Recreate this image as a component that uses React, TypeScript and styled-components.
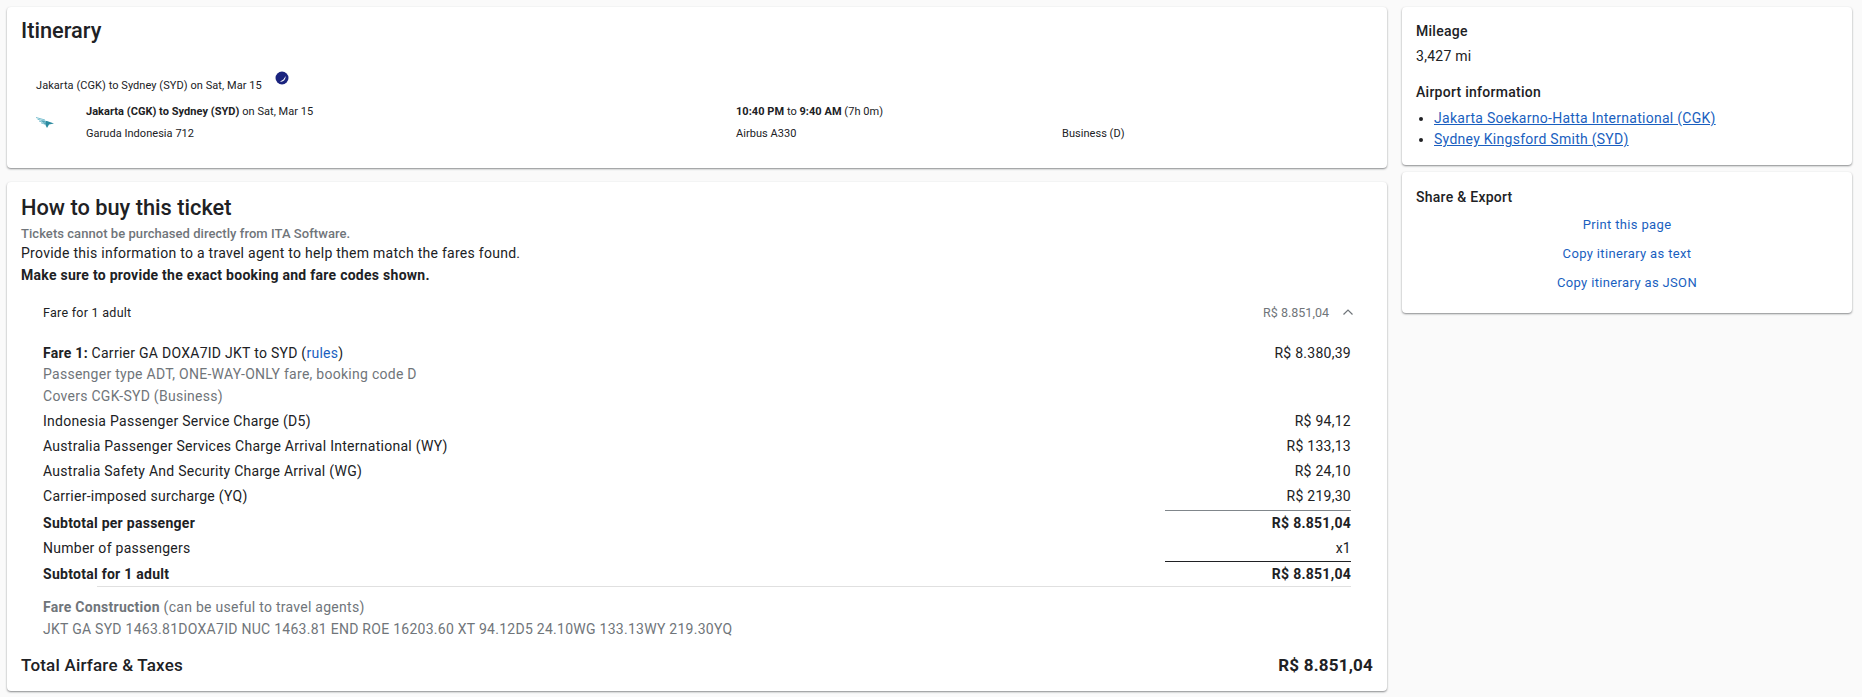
import styled, { createGlobalStyle } from 'styled-components';

const GlobalStyle = createGlobalStyle`
  html, body {
    margin: 0;
    padding: 0;
    background: #fafafa;
    color: #202124;
    font-family: Roboto, "Liberation Sans", sans-serif;
    font-size: 14px;
    letter-spacing: 0.27px;
  }
`;

const Page = styled.div`
  display: grid;
  grid-template-columns: 1380px 450px;
  column-gap: 15px;
  align-items: start;
  padding: 7px 10px 7px 7px;
  height: 697px;
  box-sizing: border-box;
  overflow: hidden;
`;

const Column = styled.div<{ $gap: number }>`
  display: flex;
  flex-direction: column;
  gap: ${(p) => p.$gap}px;
`;

const Card = styled.section`
  background: #fff;
  border-radius: 4px;
  box-shadow: 0 1px 2px rgba(60, 64, 67, 0.6);
`;

const ItineraryCard = styled(Card)`
  height: 161px;
  box-sizing: border-box;
  padding: 11px 14px 0;
  letter-spacing: 0.04px;
`;

const BuyCard = styled(Card)`
  height: 509px;
  box-sizing: border-box;
  padding: 13px 14px 0;
`;

const Title = styled.h2`
  margin: 0;
  font-size: 21.8px;
  line-height: 26px;
  font-weight: 500;
  letter-spacing: 0;
  color: #202124;
`;

const SliceHeader = styled.div`
  display: flex;
  align-items: flex-start;
  gap: 13px;
  margin: 31px 0 0 15px;
  height: 26px;
  font-size: 11px;
  line-height: 16px;
  padding-top: 3px;
  box-sizing: border-box;
  letter-spacing: 0.06px;
`;

const MoonIcon = styled.svg`
  margin-top: -7px;
`;

const Segment = styled.div`
  display: grid;
  grid-template-columns: 50px 650px 326px 1fr;
  margin-left: 15px;
  font-size: 11px;
  line-height: 22px;
`;

const LogoCell = styled.div`
  display: flex;
  align-items: center;
`;

const Strong = styled.strong`
  font-weight: 700;
`;

const Note = styled.div`
  font-size: 13px;
  line-height: 18px;
  color: #70757a;
  font-weight: 500;
  letter-spacing: 0.05px;
  margin-top: 4px;
`;

const Lead = styled.div`
  line-height: 21px;
`;

const BoldLead = styled(Lead)`
  margin-top: 1px;
  font-weight: 700;
`;

const FareSection = styled.div`
  margin: 0 22px;
`;

const FareHeader = styled.div`
  display: flex;
  justify-content: space-between;
  align-items: center;
  height: 24px;
  margin: 14px 0 18px;
  font-size: 12.5px;
`;

const FareHeaderRight = styled.div`
  display: flex;
  align-items: center;
  gap: 13px;
  color: #70757a;
  letter-spacing: 0.02px;
  margin-right: -3px;
`;

const FareRow = styled.div<{ $bold?: boolean; $h?: number }>`
  display: flex;
  justify-content: space-between;
  align-items: center;
  height: ${(p) => p.$h ?? 25}px;
  font-weight: ${(p) => (p.$bold ? 700 : 400)};
`;

const CostList = styled.div`
  margin: 1px 0 2px;
`;

const Amount = styled.div<{ $rule?: string }>`
  width: 186px;
  box-sizing: border-box;
  height: 100%;
  display: flex;
  align-items: center;
  justify-content: flex-end;
  border-top: ${(p) => (p.$rule ? `1px solid ${p.$rule}` : 'none')};
`;

const Grey = styled.div`
  color: #70757a;
  line-height: 22px;
`;

const Rule = styled.div`
  height: 1px;
  background: #e0e0e0;
  margin: 0 0 9px 54px;
`;

const BlueLink = styled.a`
  color: #1a5fc0;
  text-decoration: none;
`;

const Total = styled.div`
  display: flex;
  justify-content: space-between;
  align-items: center;
  margin-top: 12px;
  height: 26px;
  font-size: 17px;
  font-weight: 500;
  letter-spacing: 0.2px;
`;

const TotalAmount = styled.span`
  font-weight: 700;
`;

const SideCard = styled(Card)<{ $h: number }>`
  height: ${(p) => p.$h}px;
  box-sizing: border-box;
  padding: 14px 14px 0;
`;

const ShareCard = styled(SideCard)`
  padding-top: 15px;
`;

const SideHeading = styled.h3<{ $mt?: number }>`
  margin: ${(p) => p.$mt ?? 0}px 0 0;
  font-size: 14px;
  line-height: 20px;
  font-weight: 500;
`;

const SideValue = styled.div`
  margin-top: 5px;
  line-height: 20px;
`;

const AirportList = styled.ul`
  margin: 6px 0 0;
  padding-left: 18px;
  line-height: 21px;
`;

const AirportLink = styled.a`
  color: #1a5fc0;
  text-decoration: underline;
`;

const ShareActions = styled.div`
  display: flex;
  flex-direction: column;
  align-items: center;
  gap: 9px;
  margin-top: 8px;
`;

const ShareButton = styled.a`
  color: #1a5fc0;
  font-size: 13px;
  line-height: 20px;
  font-weight: 400;
  letter-spacing: 0.35px;
`;

const costs = [
  ['Indonesia Passenger Service Charge (D5)', 'R$ 94,12'],
  ['Australia Passenger Services Charge Arrival International (WY)', 'R$ 133,13'],
  ['Australia Safety And Security Charge Arrival (WG)', 'R$ 24,10'],
  ['Carrier-imposed surcharge (YQ)', 'R$ 219,30'],
];

const GarudaLogo = () => (
  <svg width="18" height="12" viewBox="0 0 18 12">
    <path d="M5 3.500 L11 4 L18 6.500 L13 7.500 L11 11 L9.500 8 Z" fill="#2c8ba0" />
    <path d="M0 0.500 L9 3 M1.500 2.200 L10 4.500 M3 4 L10 6 M5 5.800 L10 7.500" stroke="#7cc0d0" strokeWidth="1" fill="none" />
  </svg>
);

const App = () => {
  return (
    <>
      <GlobalStyle />
      <Page>
        <Column $gap={14}>
          <ItineraryCard>
            <Title>Itinerary</Title>
            <SliceHeader>
              <span>Jakarta (CGK) to Sydney (SYD) on Sat, Mar 15</span>
              <MoonIcon width="14" height="14" viewBox="0 0 14 14">
                <circle cx="7" cy="7" r="6.500" fill="#1a237e" />
                <path d="M10.500 5 A4.600 4.600 0 0 1 5 10.500 A9 9 0 0 0 10.500 5 Z" fill="#fff" />
              </MoonIcon>
            </SliceHeader>
            <Segment>
              <LogoCell>
                <GarudaLogo />
              </LogoCell>
              <div>
                <div>
                  <Strong>Jakarta (CGK) to Sydney (SYD)</Strong> on Sat, Mar 15
                </div>
                <div>Garuda Indonesia 712</div>
              </div>
              <div>
                <div>
                  <Strong>10:40 PM</Strong> to <Strong>9:40 AM</Strong> (7h 0m)
                </div>
                <div>Airbus A330</div>
              </div>
              <div>
                <div>&nbsp;</div>
                <div>Business (D)</div>
              </div>
            </Segment>
          </ItineraryCard>
          <BuyCard>
            <Title>How to buy this ticket</Title>
            <Note>Tickets cannot be purchased directly from ITA Software.</Note>
            <Lead>Provide this information to a travel agent to help them match the fares found.</Lead>
            <BoldLead>Make sure to provide the exact booking and fare codes shown.</BoldLead>
            <FareSection>
              <FareHeader>
                <span>Fare for 1 adult</span>
                <FareHeaderRight>
                  <span>R$ 8.851,04</span>
                  <svg width="12" height="8" viewBox="0 0 12 8" fill="none" stroke="#70757a" strokeWidth="1.2">
                    <path d="M1.5 6.5 L6 2 L10.500 6.5" />
                  </svg>
                </FareHeaderRight>
              </FareHeader>
              <FareRow $h={21}>
                <span>
                  <Strong>Fare 1:</Strong> Carrier GA DOXA7ID JKT to SYD (<BlueLink>rules</BlueLink>)
                </span>
                <span>R$ 8.380,39</span>
              </FareRow>
              <Grey>Passenger type ADT, ONE-WAY-ONLY fare, booking code D</Grey>
              <Grey>Covers CGK-SYD (Business)</Grey>
              <CostList>
                {costs.map(([label, value]) => (
                  <FareRow key={label}>
                    <span>{label}</span>
                    <span>{value}</span>
                  </FareRow>
                ))}
              </CostList>
              <FareRow $bold>
                <span>Subtotal per passenger</span>
                <Amount $rule="#80868b">R$ 8.851,04</Amount>
              </FareRow>
              <FareRow $h={26}>
                <span>Number of passengers</span>
                <Amount>x1</Amount>
              </FareRow>
              <FareRow $bold>
                <span>Subtotal for 1 adult</span>
                <Amount $rule="#202124">R$ 8.851,04</Amount>
              </FareRow>
              <Rule />
              <Grey>
                <Strong>Fare Construction</Strong> (can be useful to travel agents)
              </Grey>
              <Grey>JKT GA SYD 1463.81DOXA7ID NUC 1463.81 END ROE 16203.60 XT 94.12D5 24.10WG 133.13WY 219.30YQ</Grey>
            </FareSection>
            <Total>
              <span>Total Airfare &amp; Taxes</span>
              <TotalAmount>R$ 8.851,04</TotalAmount>
            </Total>
          </BuyCard>
        </Column>
        <Column $gap={7}>
          <SideCard $h={158}>
            <SideHeading>Mileage</SideHeading>
            <SideValue>3,427 mi</SideValue>
            <SideHeading $mt={16}>Airport information</SideHeading>
            <AirportList>
              <li>
                <AirportLink>Jakarta Soekarno-Hatta International (CGK)</AirportLink>
              </li>
              <li>
                <AirportLink>Sydney Kingsford Smith (SYD)</AirportLink>
              </li>
            </AirportList>
          </SideCard>
          <ShareCard $h={141}>
            <SideHeading>Share &amp; Export</SideHeading>
            <ShareActions>
              <ShareButton>Print this page</ShareButton>
              <ShareButton>Copy itinerary as text</ShareButton>
              <ShareButton>Copy itinerary as JSON</ShareButton>
            </ShareActions>
          </ShareCard>
        </Column>
      </Page>
    </>
  );
};

export default App;
